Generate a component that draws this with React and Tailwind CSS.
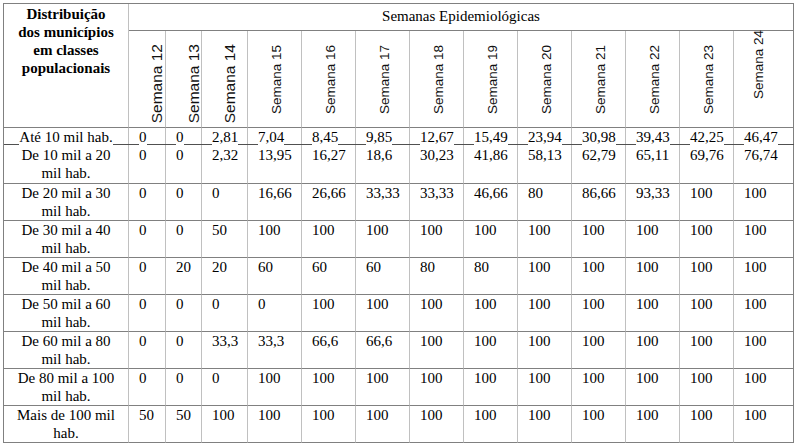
const semanas = [12, 13, 14, 15, 16, 17, 18, 19, 20, 21, 22, 23, 24];

const rows = [
  { label: ["Até 10 mil hab."], values: ["0", "0", "2,81", "7,04", "8,45", "9,85", "12,67", "15,49", "23,94", "30,98", "39,43", "42,25", "46,47"] },
  { label: ["De 10 mil a 20", "mil hab."], values: ["0", "0", "2,32", "13,95", "16,27", "18,6", "30,23", "41,86", "58,13", "62,79", "65,11", "69,76", "76,74"] },
  { label: ["De 20 mil a 30", "mil hab."], values: ["0", "0", "0", "16,66", "26,66", "33,33", "33,33", "46,66", "80", "86,66", "93,33", "100", "100"] },
  { label: ["De 30 mil a 40", "mil hab."], values: ["0", "0", "50", "100", "100", "100", "100", "100", "100", "100", "100", "100", "100"] },
  { label: ["De 40 mil a 50", "mil hab."], values: ["0", "20", "20", "60", "60", "60", "80", "80", "100", "100", "100", "100", "100"] },
  { label: ["De 50 mil a 60", "mil hab."], values: ["0", "0", "0", "0", "100", "100", "100", "100", "100", "100", "100", "100", "100"] },
  { label: ["De 60 mil a 80", "mil hab."], values: ["0", "0", "33,3", "33,3", "66,6", "66,6", "100", "100", "100", "100", "100", "100", "100"] },
  { label: ["De 80 mil a 100", "mil hab."], values: ["0", "0", "0", "100", "100", "100", "100", "100", "100", "100", "100", "100", "100"] },
  { label: ["Mais de 100 mil", "hab."], values: ["50", "50", "100", "100", "100", "100", "100", "100", "100", "100", "100", "100", "100"] },
];

function WeekHeader({ n }) {
  const narrow = n <= 14;
  const last = n === 24;
  return (
    <div
      className={
        "flex items-end border-b border-[#808080] " +
        (last ? "pl-[16px] pb-[28px]" : narrow ? "pl-[19px] pb-[4px] border-r border-r-[#c0c0c0]" : "pl-[20px] pb-[13px] border-r border-r-[#c0c0c0]")
      }
    >
      <span
        className={
          "[writing-mode:vertical-rl] rotate-180 whitespace-nowrap font-['Liberation_Sans',Arial,sans-serif] text-[#111] " +
          (narrow ? "text-[15.5px]" : "text-[13.5px]")
        }
      >
        Semana {n}
      </span>
    </div>
  );
}

function Cell({ children, first, lastCol, rowIdx }) {
  const underline = rowIdx === 0;
  const base =
    (first ? "text-center px-[2px] " : "text-left pl-[10px] ") +
    (lastCol ? "" : "border-r border-r-[#c0c0c0] ") +
    (underline ? "relative " : "border-b border-[#808080] ");
  return (
    <div className={base}>
      {underline && <div className="absolute left-0 -right-px bottom-[1px] h-px bg-[#505050]" />}
      <span className={underline ? "relative bg-white" : ""}>{children}</span>
    </div>
  );
}

export default function App() {
  return (
    <div className="w-[798px] h-[446px] bg-white pt-[3px] pl-[3px]">
      <div className="w-[791px] border-t border-l border-r border-[#808080] font-['Liberation_Serif','Times_New_Roman',serif] text-[15px] leading-[18px] text-black">
        <div className="grid grid-cols-[125px_37px_36px_46px_54px_54px_54px_54px_54px_54px_54px_54px_54px_59px] grid-rows-[27px_97px_18px_38px_37px_37px_37px_37px_37px_37px_37px]">
          <div className="row-span-2 border-r border-r-[#c0c0c0] border-b border-[#808080] text-center font-bold pt-[1px]">
            Distribuição
            <br />
            dos municípios
            <br />
            em classes
            <br />
            populacionais
          </div>
          <div className="col-span-13 border-b border-[#808080] text-center pt-[3px]">
            Semanas Epidemiológicas
          </div>
          {semanas.map((n) => (
            <WeekHeader key={n} n={n} />
          ))}
          {rows.map((row, ri) => [
            <Cell key={`l${ri}`} first rowIdx={ri}>
              {row.label.map((line, i) => (
                <span key={i}>
                  {i > 0 && <br />}
                  {line}
                </span>
              ))}
            </Cell>,
            ...row.values.map((v, ci) => (
              <Cell key={`${ri}-${ci}`} rowIdx={ri} lastCol={ci === row.values.length - 1}>
                {v}
              </Cell>
            )),
          ])}
        </div>
      </div>
    </div>
  );
}
